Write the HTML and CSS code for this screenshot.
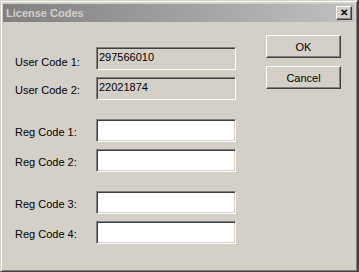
FILE: index.html
```html
<!DOCTYPE html>
<html lang="en">
<head>
    <meta charset="UTF-8">
    <title>License Codes</title>
    <link rel="stylesheet" href="styles.css">
</head>
<body>
    <div class="window">
        <!-- Title bar -->
        <div class="title-bar">
            <span class="title">License Codes</span>
            <span class="close-btn">&#x2715;</span>
        </div>

        <!-- Dialog body -->
        <div class="dialog">
            <div class="form">
                <div class="group">
                    <div class="row">
                        <label class="label first">User Code 1:</label>
                        <div class="field readonly">297566010</div>
                    </div>
                    <div class="row">
                        <label class="label">User Code 2:</label>
                        <div class="field readonly">22021874</div>
                    </div>
                </div>
                <div class="group">
                    <div class="row">
                        <label class="label">Reg Code 1:</label>
                        <div class="field"></div>
                    </div>
                    <div class="row">
                        <label class="label">Reg Code 2:</label>
                        <div class="field"></div>
                    </div>
                </div>
                <div class="group">
                    <div class="row">
                        <label class="label">Reg Code 3:</label>
                        <div class="field"></div>
                    </div>
                    <div class="row">
                        <label class="label">Reg Code 4:</label>
                        <div class="field"></div>
                    </div>
                </div>
            </div>

            <div class="buttons">
                <button class="button">OK</button>
                <button class="button">Cancel</button>
            </div>
        </div>
    </div>
</body>
</html>
```

FILE: styles.css
```css
/* General Styles */
body {
    font-family: "Liberation Sans", Arial, sans-serif;
    font-size: 11px;
    background-color: #404040;
    margin: 0;
    padding: 0;
}

.window {
    box-sizing: border-box;
    width: 358px;
    height: 272px;
    background-color: #d4d0c8;
    border-top: 1px solid #d4d0c8;
    border-left: 1px solid #d4d0c8;
    border-right: 1px solid #404040;
    border-bottom: 1px solid #404040;
    box-shadow: inset 1px 1px #ffffff, inset -1px -1px #808080;
    padding: 2px 3px 3px 2px;
    display: flex;
    flex-direction: column;
}

/* Title bar */
.title-bar {
    height: 18px;
    margin-top: 1px;
    background: linear-gradient(to right, #808080, #c0c0c0);
    display: flex;
    align-items: center;
    justify-content: space-between;
    padding: 0 2px 0 3px;
}

.title {
    color: #d4d0c8;
    font-weight: bold;
    font-size: 11px;
}

.close-btn {
    box-sizing: border-box;
    width: 16px;
    height: 14px;
    background-color: #d4d0c8;
    border-top: 1px solid #ffffff;
    border-left: 1px solid #ffffff;
    border-right: 1px solid #404040;
    border-bottom: 1px solid #404040;
    box-shadow: inset -1px -1px #808080;
    font-size: 10px;
    font-weight: bold;
    line-height: 12px;
    text-align: center;
    color: #000000;
}

/* Dialog body */
.dialog {
    display: flex;
    padding-left: 12px;
}

.form {
    padding-top: 25px;
    display: flex;
    flex-direction: column;
    gap: 19px;
}

.group {
    display: flex;
    flex-direction: column;
    gap: 7px;
}

.row {
    display: flex;
    align-items: center;
}

.label {
    width: 81px;
    color: #000000;
    padding-top: 3px;
}

.label.first {
    padding-top: 6px;
}

.field {
    box-sizing: border-box;
    width: 140px;
    height: 23px;
    background-color: #ffffff;
    border-top: 1px solid #808080;
    border-left: 1px solid #808080;
    border-right: 1px solid #ffffff;
    border-bottom: 1px solid #ffffff;
    box-shadow: inset 1px 1px #404040, inset -1px -1px #d4d0c8;
    padding: 3px 0 0 2px;
    color: #000000;
}

.field.readonly {
    background-color: #d4d0c8;
}

/* Buttons */
.buttons {
    padding-top: 13px;
    margin-left: 30px;
    display: flex;
    flex-direction: column;
    gap: 8px;
}

.button {
    box-sizing: border-box;
    width: 75px;
    height: 23px;
    background-color: #d4d0c8;
    border-top: 1px solid #ffffff;
    border-left: 1px solid #ffffff;
    border-right: 1px solid #404040;
    border-bottom: 1px solid #404040;
    box-shadow: inset -1px -1px #808080;
    font-family: "Liberation Sans", Arial, sans-serif;
    font-size: 11px;
    color: #000000;
    padding: 0;
}
```
